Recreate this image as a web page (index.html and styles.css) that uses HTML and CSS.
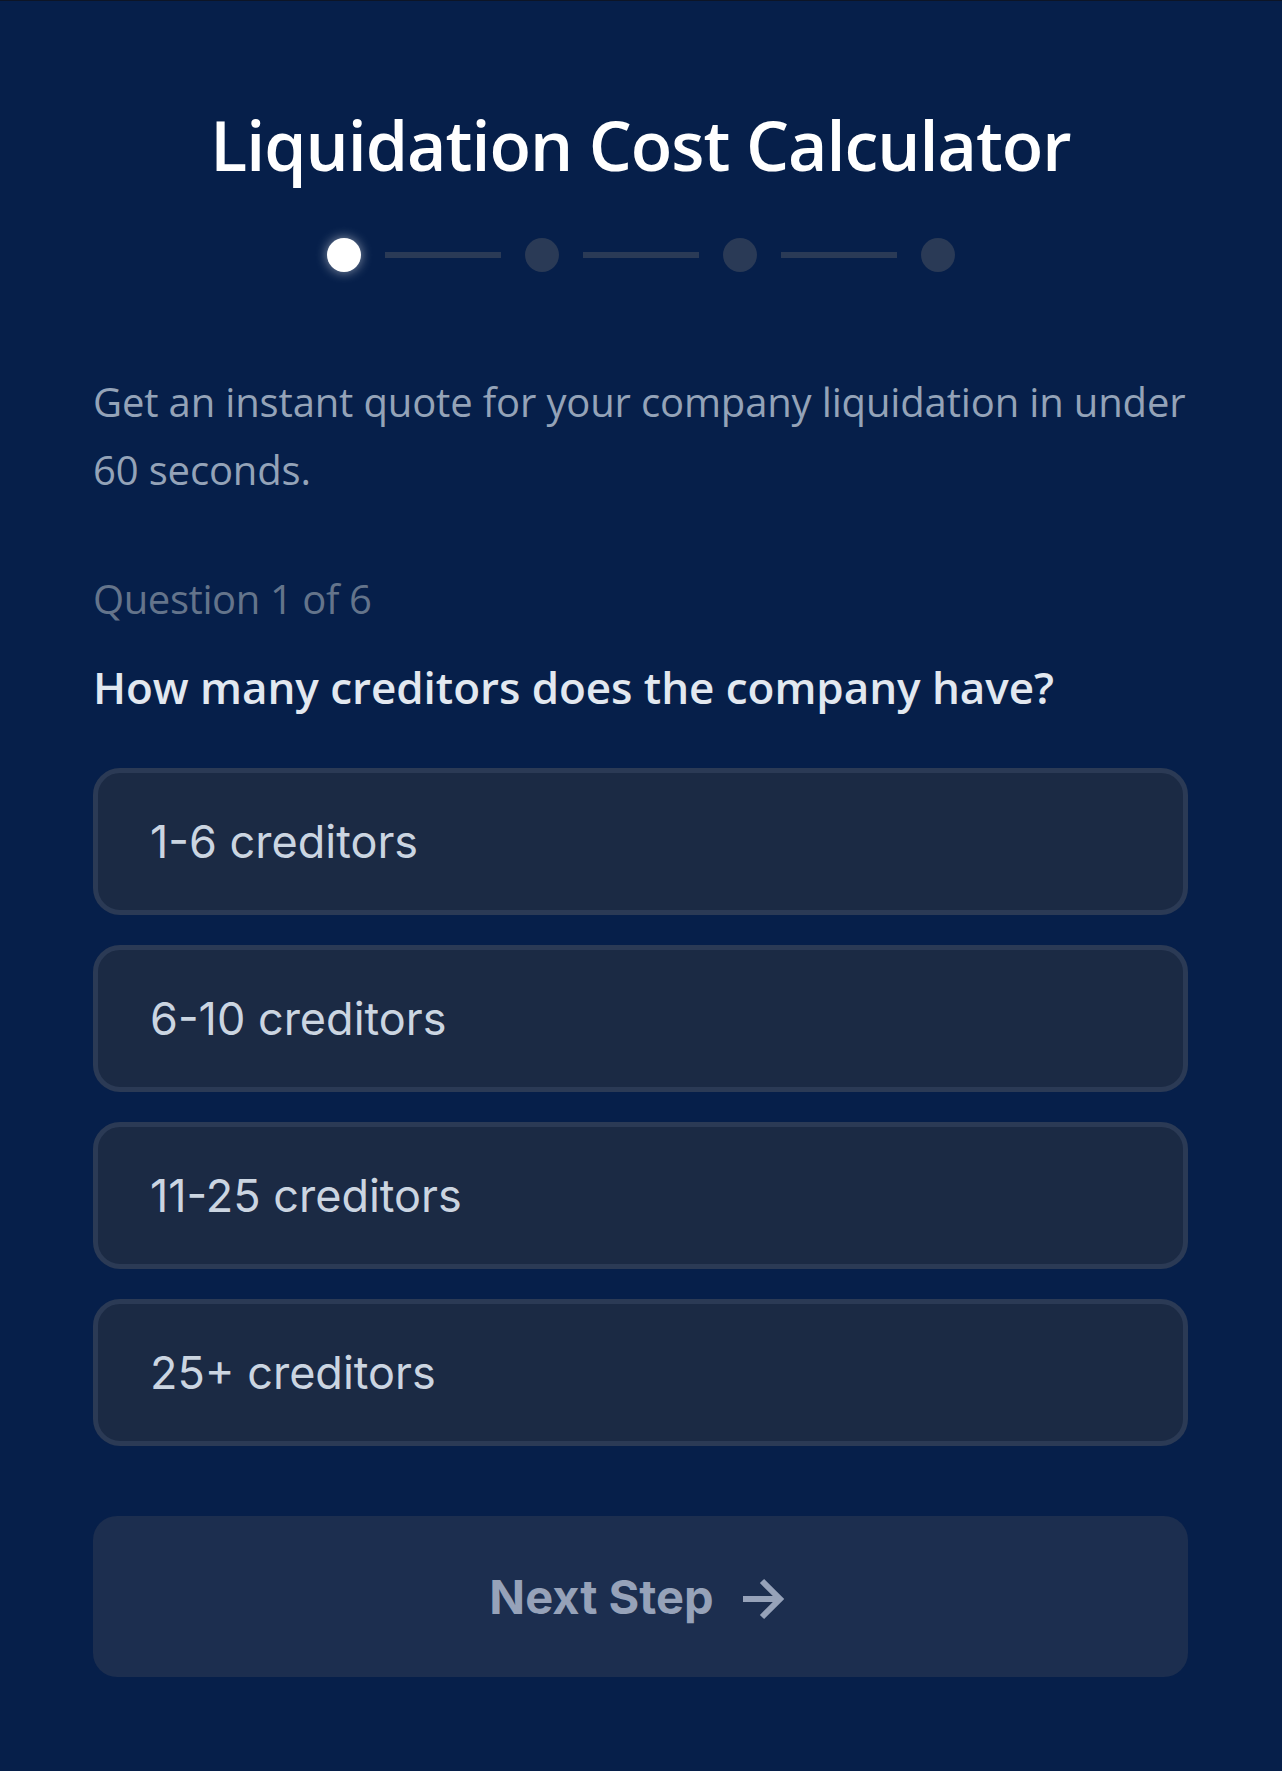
FILE: index.html
```html
<!DOCTYPE html>
<html lang="en">
<head>
<meta charset="utf-8">
<title>Liquidation Cost Calculator</title>
<link rel="stylesheet" href="styles.css">
</head>
<body>
<main class="calc">
  <h1 class="calc-title">Liquidation Cost Calculator</h1>
  <div class="steps">
    <span class="step-dot is-active"></span>
    <span class="step-line"></span>
    <span class="step-dot"></span>
    <span class="step-line"></span>
    <span class="step-dot"></span>
    <span class="step-line"></span>
    <span class="step-dot"></span>
  </div>
  <p class="intro">Get an instant quote for your company liquidation in under 60 seconds.</p>
  <p class="q-count">Question 1 of 6</p>
  <h2 class="q-text">How many creditors does the company have?</h2>
  <div class="options">
    <button class="option" type="button">1-6 creditors</button>
    <button class="option" type="button">6-10 creditors</button>
    <button class="option" type="button">11-25 creditors</button>
    <button class="option" type="button">25+ creditors</button>
  </div>
  <button class="next-btn" type="button">
    <span>Next Step</span>
    <svg class="next-icon" width="42" height="42" viewBox="0 0 42 42" aria-hidden="true">
      <path d="M0 21 H37" fill="none" stroke="currentColor" stroke-width="6"/>
      <path d="M19 3 L37 21 L19 39" fill="none" stroke="currentColor" stroke-width="6"/>
    </svg>
  </button>
</main>
</body>
</html>
```

FILE: styles.css
```css
* { box-sizing: border-box; }

html, body {
  margin: 0;
  padding: 0;
}

body {
  background: #061f4a;
  border-top: 1px solid #0d1526;
  min-height: 1771px;
  font-family: "Open Sans", "Noto Sans", sans-serif;
}

.calc {
  display: flex;
  flex-direction: column;
  padding: 0 94px 0 93px;
}

.calc-title {
  margin: 102px 0 0;
  text-align: center;
  color: #ffffff;
  font-size: 68px;
  font-weight: 600;
  line-height: 84px;
  letter-spacing: -1px;
}

.steps {
  display: flex;
  justify-content: center;
  align-items: center;
  gap: 24px;
  margin-top: 51px;
  height: 34px;
}

.step-dot {
  width: 34px;
  height: 34px;
  border-radius: 50%;
  background: #2a3a56;
}

.step-dot.is-active {
  background: #ffffff;
  box-shadow: 0 0 12px rgba(255, 255, 255, 0.55);
}

.step-line {
  width: 116px;
  height: 6px;
  background: #2a3a56;
}

.intro {
  margin: 96px 0 0;
  color: #94a3b8;
  font-size: 40px;
  line-height: 68px;
  letter-spacing: -0.15px;
}

.q-count {
  margin: 67px 0 0;
  color: #64748b;
  font-size: 40px;
  line-height: 56px;
  letter-spacing: -0.4px;
}

.q-text {
  margin: 33px 0 0;
  color: #e2e8f0;
  font-size: 44px;
  font-weight: 600;
  line-height: 55px;
  letter-spacing: -0.05px;
}

.options {
  display: flex;
  flex-direction: column;
  gap: 30px;
  margin-top: 53px;
}

.option {
  display: block;
  width: 100%;
  text-align: left;
  background: #1b2a44;
  border: 5px solid #2b3a55;
  border-radius: 27px;
  padding: 41.5px 52px;
  color: #cbd5e1;
  font-family: "Inter", "Liberation Sans", sans-serif;
  font-size: 45px;
  font-weight: 400;
  line-height: 54px;
}

.next-btn {
  display: flex;
  justify-content: center;
  align-items: center;
  width: 100%;
  height: 161px;
  margin-top: 70px;
  padding: 0 7px 0 0;
  background: #1c2e4f;
  border: none;
  border-radius: 24px;
  color: #96a2b9;
  font-family: "Inter", "Liberation Sans", sans-serif;
  font-size: 47px;
  font-weight: 700;
  line-height: 54px;
}

.next-icon {
  margin-left: 29px;
  margin-top: 4px;
}
```
